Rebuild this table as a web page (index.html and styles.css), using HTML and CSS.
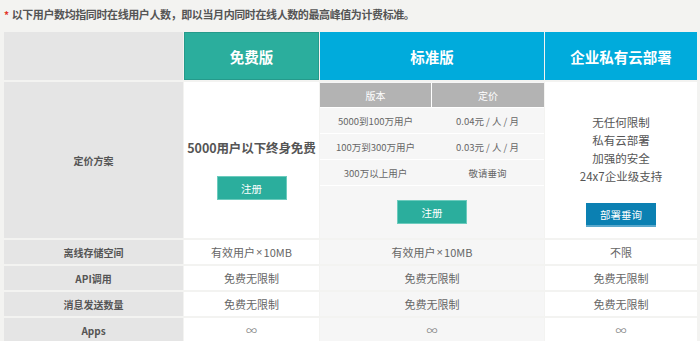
FILE: index.html
```html
<!DOCTYPE html>
<html lang="zh-CN">
<head>
<meta charset="utf-8">
<title>价格方案</title>
<link rel="stylesheet" href="styles.css">
</head>
<body>
<p class="note"><span class="star">*</span>以下用户数均指同时在线用户人数，即以当月内同时在线人数的最高峰值为计费标准。</p>
<div class="pricing">
  <div class="cell head-blank"></div>
  <div class="cell head teal">免费版</div>
  <div class="cell head blue">标准版</div>
  <div class="cell head blue">企业私有云部署</div>

  <div class="cell label">定价方案</div>
  <div class="cell plan plan-free">
    <div class="free-title">5000用户以下终身免费</div>
    <a class="btn btn-teal">注册</a>
  </div>
  <div class="cell plan-std">
    <div class="tiers">
      <div class="tier-head">版本</div>
      <div class="tier-head">定价</div>
      <div class="tier-row"><span>5000到100万用户</span><span>0.04元 / 人 / 月</span></div>
      <div class="tier-row"><span>100万到300万用户</span><span>0.03元 / 人 / 月</span></div>
      <div class="tier-row"><span>300万以上用户</span><span>敬请垂询</span></div>
    </div>
    <div class="std-action"><a class="btn btn-teal">注册</a></div>
  </div>
  <div class="cell plan plan-ent">
    <ul class="features">
      <li>无任何限制</li>
      <li>私有云部署</li>
      <li>加强的安全</li>
      <li>24x7企业级支持</li>
    </ul>
    <a class="btn btn-blue">部署垂询</a>
  </div>

  <div class="cell label">离线存储空间</div>
  <div class="cell val white">有效用户<span class="times">×</span>10MB</div>
  <div class="cell val grey">有效用户<span class="times">×</span>10MB</div>
  <div class="cell val white">不限</div>

  <div class="cell label">API调用</div>
  <div class="cell val white">免费无限制</div>
  <div class="cell val grey">免费无限制</div>
  <div class="cell val white">免费无限制</div>

  <div class="cell label">消息发送数量</div>
  <div class="cell val white">免费无限制</div>
  <div class="cell val grey">免费无限制</div>
  <div class="cell val white">免费无限制</div>

  <div class="cell label">Apps</div>
  <div class="cell val white inf">∞</div>
  <div class="cell val grey inf">∞</div>
  <div class="cell val white inf">∞</div>
</div>
</body>
</html>
```
FILE: styles.css
```css
* { box-sizing: border-box; }
html, body { margin: 0; padding: 0; }
body {
  background: #f3f3f1;
  font-family: "Noto Sans CJK SC", "Microsoft YaHei", sans-serif;
  color: #666;
  width: 700px;
  height: 341px;
  overflow: hidden;
}
.note {
  margin: 0 0 4px;
  padding-left: 4px;
  height: 28px;
  line-height: 28px;
  font-size: 11px;
  font-weight: bold;
  color: #555;
  letter-spacing: -0.4px;
  white-space: nowrap;
}
.star {
  color: #e2342a;
  font-size: 10px;
  margin-right: 3px;
}
.pricing {
  margin-left: 4px;
  display: grid;
  grid-template-columns: 179px 135px 224px 152px;
  grid-template-rows: 48px 156px repeat(4, 24px);
  column-gap: 1px;
  row-gap: 2px;
}
.cell {
  display: flex;
  align-items: center;
  justify-content: center;
  text-align: center;
}
.head-blank { background: #e5e5e5; }
.head {
  color: #fff;
  font-size: 14.5px;
  font-weight: bold;
}
.teal { background: #2bae9d; border: 1px solid #259a8b; }
.blue { background: #00abdc; }
.label {
  background: #e5e5e5;
  color: #555;
  font-size: 10px;
  font-weight: bold;
}
.plan {
  flex-direction: column;
  background: #fff;
}
.plan-free { padding-top: 19px; }
.free-title {
  font-size: 12.5px;
  font-weight: bold;
  color: #555;
  line-height: 18px;
  letter-spacing: -0.1px;
  margin-bottom: 19px;
  white-space: nowrap;
}
.btn {
  display: flex;
  align-items: center;
  justify-content: center;
  width: 70px;
  height: 24px;
  color: #fff;
  font-size: 10.5px;
}
.btn-teal { background: #2bae9d; border: 1px solid #6ccbbd; }
.btn-blue { background: #0b80b2; border-bottom: 2px solid #5aa8cc; }
.plan-std {
  display: flex;
  flex-direction: column;
  background: #f6f6f6;
  padding-top: 1px;
}
.tiers {
  display: grid;
  grid-template-columns: 111px 112px;
  grid-template-rows: 24px repeat(3, 25px);
  gap: 1px;
  background: #fff;
  padding-bottom: 1px;
}
.tier-head {
  background: #b3b3b3;
  color: #fff;
  font-size: 10px;
  display: flex;
  align-items: center;
  justify-content: center;
}
.tier-row {
  grid-column: 1 / 3;
  display: grid;
  grid-template-columns: 111px 113px;
  background: #f6f6f6;
  font-size: 9.5px;
  color: #666;
  align-items: center;
  text-align: center;
  white-space: nowrap;
}
.std-action {
  flex: 1;
  display: flex;
  align-items: center;
  justify-content: center;
}
.plan-ent { padding-top: 20px; }
.features {
  list-style: none;
  margin: 0 0 18px;
  padding: 0;
  font-size: 11.5px;
  line-height: 18px;
  color: #555;
}
.val {
  font-size: 11px;
  color: #666;
}
.times {
  font-family: "Liberation Sans", sans-serif;
  margin: 0 1px;
}
.white { background: #fff; }
.grey { background: #f6f6f6; }
.inf { color: #888; font-size: 11px; }
```
